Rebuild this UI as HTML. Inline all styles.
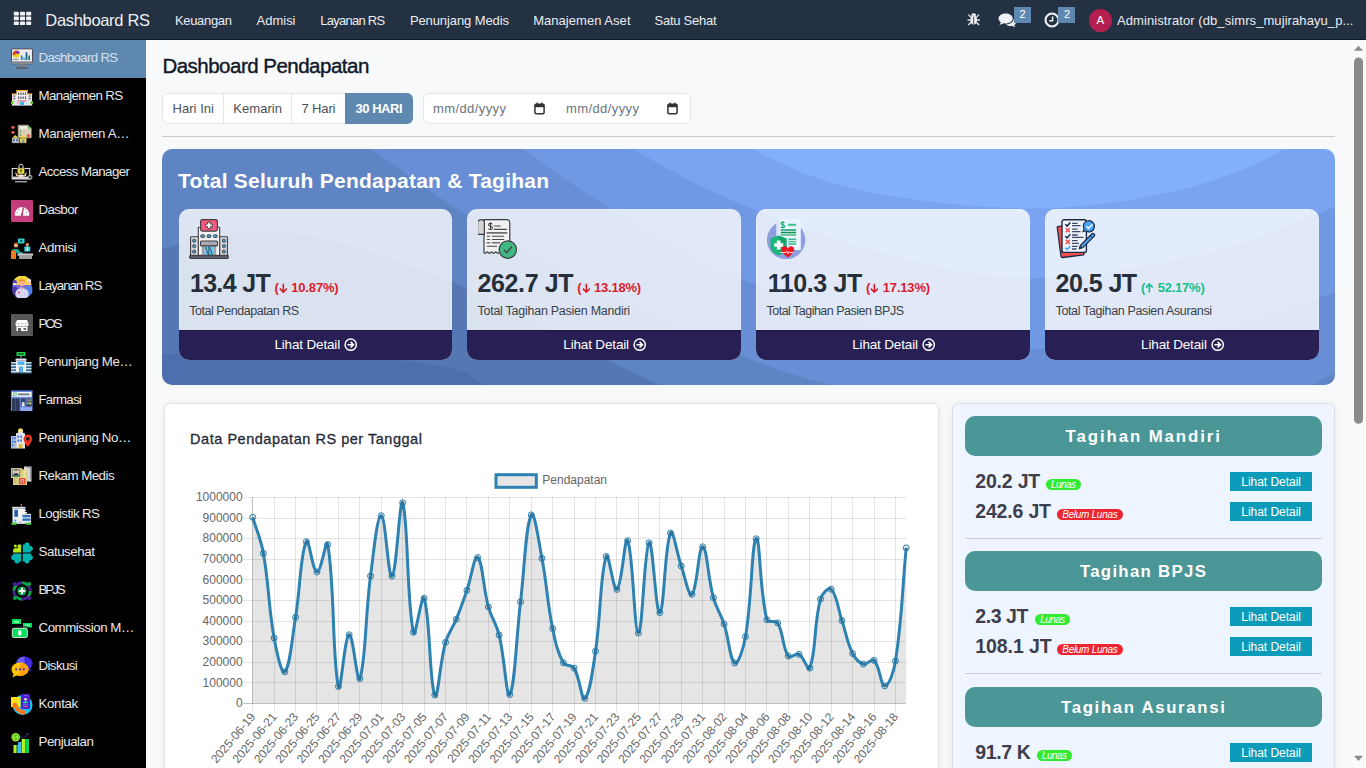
<!DOCTYPE html>
<html><head><meta charset="utf-8"><title>Dashboard RS</title>
<style>
*{box-sizing:border-box;margin:0;padding:0}
html,body{width:1366px;height:768px;overflow:hidden;background:#f8f9fa;font-family:"Liberation Sans",sans-serif;color:#212529}
.tx{position:absolute;white-space:nowrap;line-height:1;display:block}
.a{position:absolute;display:block}
#nav{position:absolute;left:0;top:0;width:1366px;height:40px;background:#243142;border-bottom:1px solid #131b25;z-index:5}
#side{position:absolute;left:0;top:40px;width:146px;height:728px;background:#000;z-index:4}
#sb{position:absolute;left:1351px;top:40px;width:15px;height:728px;background:#fafafa;z-index:6}

#main{position:absolute;left:0;top:0;width:1351px;height:768px;background:#f8f9fa;overflow:hidden}
.m5{-webkit-text-stroke:0.35px currentColor}
.card{position:absolute;top:208.7px;width:273.8px;height:151px;border-radius:10px;overflow:hidden;background:rgba(255,255,255,0.79);box-shadow:inset 0 0 0 1px rgba(255,255,255,0.2)}
.card .ft{position:absolute;left:0;top:121.1px;width:100%;height:30px;background:#281f54;border-top:1px solid #1e1549}
.btn{position:absolute;width:82px;height:19px;background:#0c9cb9}
.hd{position:absolute;left:965px;width:357px;height:40px;border-radius:10px;background:#4b9797}
.sep{position:absolute;left:965px;width:357px;height:1px;background:#c8cdd6}
</style></head>
<body>
<div id="main">
<span class="tx" style="left:162.40px;top:56px;font-size:20.5px;font-weight:400;color:#111827;letter-spacing:-0.509px;-webkit-text-stroke:0.4px #111827;">Dashboard Pendapatan</span>
<div class="a" style="left:162px;top:93px;width:251px;height:31px;border:1px solid #e3e6ea;border-radius:6px;background:#fff"></div><div class="a" style="left:223px;top:93px;width:1px;height:31px;background:#e3e6ea"></div><div class="a" style="left:291px;top:93px;width:1px;height:31px;background:#e3e6ea"></div><div class="a" style="left:345px;top:93px;width:68.2px;height:31px;background:#5f88b0;border-radius:0 6px 6px 0"></div>
<span class="tx" style="left:172.60px;top:102px;font-size:13px;font-weight:400;color:#495057;letter-spacing:0.018px;">Hari Ini</span>
<span class="tx" style="left:233.30px;top:102px;font-size:13px;font-weight:400;color:#495057;letter-spacing:0.049px;">Kemarin</span>
<span class="tx" style="left:301.50px;top:102px;font-size:13px;font-weight:400;color:#495057;letter-spacing:-0.136px;">7 Hari</span>
<span class="tx" style="left:355.50px;top:102px;font-size:13px;font-weight:700;color:#fff;letter-spacing:-0.475px;">30 HARI</span>
<div class="a" style="left:423px;top:93px;width:268px;height:31px;border:1px solid #e3e6ea;border-radius:6px;background:#fff"></div>
<span class="tx" style="left:433.00px;top:102px;font-size:13px;font-weight:400;color:#6c757d;letter-spacing:0.406px;">mm/dd/yyyy</span>
<svg class="a" style="left:534px;top:101.5px" width="11" height="13" viewBox="0 0 11 13"><rect x="0.9" y="2.2" width="9.2" height="9.6" rx="1.2" fill="none" stroke="#333" stroke-width="1.5"/><rect x="0.9" y="2.2" width="9.2" height="3" fill="#333"/><rect x="2.4" y="0.6" width="1.4" height="2.4" fill="#333"/><rect x="7.2" y="0.6" width="1.4" height="2.4" fill="#333"/></svg>
<span class="tx" style="left:566.00px;top:102px;font-size:13px;font-weight:400;color:#6c757d;letter-spacing:0.406px;">mm/dd/yyyy</span>
<svg class="a" style="left:667.4px;top:101.5px" width="11" height="13" viewBox="0 0 11 13"><rect x="0.9" y="2.2" width="9.2" height="9.6" rx="1.2" fill="none" stroke="#333" stroke-width="1.5"/><rect x="0.9" y="2.2" width="9.2" height="3" fill="#333"/><rect x="2.4" y="0.6" width="1.4" height="2.4" fill="#333"/><rect x="7.2" y="0.6" width="1.4" height="2.4" fill="#333"/></svg>
<div class="a" style="left:162px;top:136px;width:1173px;height:1px;background:#c8cacf"></div>
<svg class="a" style="left:162px;top:149px" width="1173" height="236" viewBox="162 149 1173 236"><g><rect x="162" y="149" width="1173" height="236" fill="#4d6fad"/><path d="M100.0 352.0C110.3 352.3 128.7 354.0 162.0 354.0C195.3 354.0 259.2 350.8 300.0 352.0C340.8 353.2 380.3 357.8 407.0 361.0C433.7 364.2 447.0 367.0 460.0 371.0C473.0 375.0 468.3 375.2 485.0 385.0C501.7 394.8 547.5 422.5 560.0 430.0L1400 450L1400 50L100 50Z" fill="#5578b5"/><path d="M100.0 270.0C110.3 266.5 142.8 254.5 162.0 249.0C181.2 243.5 197.0 239.8 215.0 237.0C233.0 234.2 249.2 231.2 270.0 232.0C290.8 232.8 309.7 233.7 340.0 242.0C370.3 250.3 418.7 268.0 452.0 282.0C485.3 296.0 514.0 313.0 540.0 326.0C566.0 339.0 588.0 350.2 608.0 360.0C628.0 369.8 634.7 373.3 660.0 385.0C685.3 396.7 743.3 422.5 760.0 430.0L1400 450L1400 50L100 50Z" fill="#5f84c4"/><path d="M300.0 100.0C311.8 108.2 343.2 129.8 371.0 149.0C398.8 168.2 428.8 191.5 467.0 215.0C505.2 238.5 553.2 266.2 600.0 290.0C646.8 313.8 709.3 342.2 748.0 358.0C786.7 373.8 798.3 376.3 832.0 385.0C865.7 393.7 905.3 404.2 950.0 410.0C994.7 415.8 1051.7 421.7 1100.0 420.0C1148.3 418.3 1204.8 405.8 1240.0 400.0C1275.2 394.2 1296.5 388.8 1311.0 385.0C1325.5 381.2 1312.2 382.8 1327.0 377.0C1341.8 371.2 1387.8 354.5 1400.0 350.0L1400 50L300 50Z" fill="#688fd5"/><path d="M470.0 100.0C479.0 108.2 498.8 129.8 524.0 149.0C549.2 168.2 583.7 192.8 621.0 215.0C658.3 237.2 701.5 262.3 748.0 282.0C794.5 301.7 851.8 321.8 900.0 333.0C948.2 344.2 987.0 349.2 1037.0 349.0C1087.0 348.8 1151.7 341.0 1200.0 332.0C1248.3 323.0 1293.7 306.2 1327.0 295.0C1360.3 283.8 1387.8 270.0 1400.0 265.0L1400 50L470 50Z" fill="#7199e3"/><path d="M580.0 100.0C589.0 108.2 606.0 131.2 634.0 149.0C662.0 166.8 703.7 188.8 748.0 207.0C792.3 225.2 851.8 246.2 900.0 258.0C948.2 269.8 987.0 278.5 1037.0 278.0C1087.0 277.5 1151.7 266.3 1200.0 255.0C1248.3 243.7 1293.7 224.2 1327.0 210.0C1360.3 195.8 1387.8 176.7 1400.0 170.0L1400 50L580 50Z" fill="#7aa3f2"/><path d="M700.0 100.0C708.8 108.2 726.3 134.0 753.0 149.0C779.7 164.0 813.8 180.1 860.0 190.0C906.2 199.9 976.7 208.5 1030.0 208.5C1083.3 208.5 1137.7 199.9 1180.0 190.0C1222.3 180.1 1257.3 164.0 1284.0 149.0C1310.7 134.0 1330.7 108.2 1340.0 100.0L1340 50L700 50Z" fill="#82b0fd"/></g><path fill-rule="evenodd" fill="#f8f9fa" d="M160 147H1337V387H160ZM172 149H1325A10 10 0 0 1 1335 159V375A10 10 0 0 1 1325 385H172A10 10 0 0 1 162 375V159A10 10 0 0 1 172 149Z"/></svg>
<span class="tx" style="left:178.00px;top:170px;font-size:21px;font-weight:700;color:#fff;letter-spacing:0.235px;">Total Seluruh Pendapatan &amp; Tagihan</span>
<div class="card" style="left:178.55px"><div class="ft"></div></div>
<svg class="a" style="left:189.05px;top:219px" width="40" height="40" viewBox="0 0 40 40"><rect x="1.6" y="17.700" width="7.900" height="18.800" rx=".6" fill="#dcdce2" stroke="#3d3d42" stroke-width="1.100"/><rect x="30.500" y="17.700" width="7.900" height="18.800" rx=".6" fill="#dcdce2" stroke="#3d3d42" stroke-width="1.100"/><rect x="9.300" y="8.300" width="21.400" height="28.200" rx=".8" fill="#f3f3f5" stroke="#3d3d42" stroke-width="1.100"/><rect x="11.600" y=".6" width="16.800" height="11.500" rx="1.600" fill="#f4587c" stroke="#3d3d42" stroke-width="1.100"/><path d="M18.700 3.100h2.600v2h2v2.600h-2v2h-2.600v-2h-2V5.100h2z" fill="#fff" stroke="#3d3d42" stroke-width=".9" stroke-linejoin="round"/><g fill="#4aa3d4" stroke="#3d3d42" stroke-width=".9"><rect x="11.800" y="15.800" width="3.800" height="2.700" rx=".8"/><rect x="18.100" y="15.800" width="3.800" height="2.700" rx=".8"/><rect x="24.400" y="15.800" width="3.800" height="2.700" rx=".8"/><rect x="3.700" y="20.300" width="2.900" height="2.900" rx=".8"/><rect x="3.700" y="25.700" width="2.900" height="2.900" rx=".8"/><rect x="3.700" y="31.200" width="2.900" height="2.900" rx=".8"/><rect x="33.400" y="20.300" width="2.900" height="2.900" rx=".8"/><rect x="33.400" y="25.700" width="2.900" height="2.900" rx=".8"/><rect x="33.400" y="31.200" width="2.900" height="2.900" rx=".8"/></g><rect x="12.800" y="26.500" width="3" height="10" fill="#a2a2aa"/><rect x="24.200" y="26.500" width="3" height="10" fill="#a2a2aa"/><rect x="15.800" y="27.300" width="8.400" height="9.200" fill="#5bc8f0"/><path d="M16.500 28l3 8M20.500 28l3 8M19.900 27.300v9.200" stroke="#2a4a5a" stroke-width=".9"/><rect x="11.500" y="22" width="17" height="4.900" rx="1" fill="#a9a9b4" stroke="#3d3d42" stroke-width="1.100"/><rect x=".5" y="36.300" width="39" height="3.200" rx="1" fill="#5c5c68" stroke="#3d3d42" stroke-width="1"/></svg>
<span class="tx" style="left:189.90px;top:271px;font-size:25px;font-weight:700;color:#262f3a;letter-spacing:-0.663px;">13.4 JT</span>
<span class="tx" style="left:274.40px;top:281px;font-size:13px;font-weight:700;color:#dc1c2b;letter-spacing:0.000px;">(</span>
<svg class="a" style="left:278.80px;top:282.8px" width="8.7" height="10" viewBox="0 0 8.7 10"><path d="M4.35 0.8V9.2M0.9 5.6L4.35 9.2 7.8 5.6" fill="none" stroke="#dc1c2b" stroke-width="1.6"/></svg>
<span class="tx" style="left:291.20px;top:281px;font-size:13px;font-weight:700;color:#dc1c2b;letter-spacing:-0.153px;">10.87%)</span>
<span class="tx" style="left:189.20px;top:305px;font-size:12.5px;font-weight:400;color:#3a3f47;letter-spacing:-0.458px;">Total Pendapatan RS</span>
<span class="tx" style="left:274.40px;top:338px;font-size:13.5px;font-weight:400;color:#fff;letter-spacing:-0.158px;">Lihat Detail</span>
<svg class="a" style="left:343.90px;top:337.8px" width="13.4" height="13.4" viewBox="0 0 14 14"><circle cx="7" cy="7" r="5.9" fill="none" stroke="#fff" stroke-width="1.5"/><path d="M3.6 7h5.5M6.9 4.1L9.9 7 6.9 9.9" fill="none" stroke="#fff" stroke-width="1.7"/></svg>
<div class="card" style="left:467.45px"><div class="ft"></div></div>
<svg class="a" style="left:477.95px;top:219px" width="40" height="40" viewBox="0 0 40 40"><g transform="translate(-1 0)"><path d="M7 .7h22.800a3 3 0 0 1 3 3v29.900q-1.075 -1.5 -2.15 0t-2.15 0q-1.075 -1.5 -2.15 0t-2.15 0q-1.075 -1.5 -2.15 0t-2.15 0q-1.075 -1.5 -2.15 0t-2.15 0q-1.075 -1.5 -2.15 0t-2.15 0q-1.075 -1.5 -2.15 0t-2.15 0V4z" fill="#f2f2f3" stroke="#3d3d42" stroke-width="1.200" stroke-linejoin="round"/><path d="M.6 15.400V4.100a3.400 3.400 0 0 1 6.800 0v11.300z" fill="#d4d4d9" stroke="#3d3d42" stroke-width="1.200" stroke-linejoin="round"/><g transform="translate(13.5 7.1) scale(.85) translate(-13.5 -7.1)"><path d="M15.60 5.10c-.5-.9-1.300-1.300-2.200-1.300-1.400 0-2.200.8-2.200 1.700 0 1.100.9 1.500 2.300 1.800 1.500.3 2.400.8 2.400 2 0 1-1 1.800-2.400 1.800-1 0-2-.4-2.500-1.300M13.50 2.70v8.800" fill="none" stroke="#3d3d42" stroke-width="1.2"/></g><g stroke="#4a4a4e" stroke-linecap="round"><path d="M17.300 7h6" stroke-width="1.100"/><path d="M17.300 10.400h12.300" stroke-width="1.100"/><path d="M10.300 13.900h19.300" stroke-width="1.700" stroke="#6e6e72"/><path d="M10.300 17.200h2.300M15.300 17.200h11.400" stroke-width="1.100"/><path d="M10.300 20.500h2.300M15.300 20.500h11.400" stroke-width="1.100"/><path d="M10.300 23.800h2.300M15.300 23.800h7" stroke-width="1.500" stroke="#6e6e72"/><path d="M10.300 27.200h9.500" stroke-width="1.100"/></g><circle cx="30.800" cy="30.600" r="8.700" fill="#41b883" stroke="#3d3d42" stroke-width="1.200"/><path d="M27 31l2.700 2.800 5-6.300" fill="none" stroke="#3d3d42" stroke-width="1.300"/></g></svg>
<span class="tx" style="left:477.60px;top:271px;font-size:25px;font-weight:700;color:#262f3a;letter-spacing:-0.397px;">262.7 JT</span>
<span class="tx" style="left:577.20px;top:281px;font-size:13px;font-weight:700;color:#dc1c2b;letter-spacing:0.000px;">(</span>
<svg class="a" style="left:581.60px;top:282.8px" width="8.7" height="10" viewBox="0 0 8.7 10"><path d="M4.35 0.8V9.2M0.9 5.6L4.35 9.2 7.8 5.6" fill="none" stroke="#dc1c2b" stroke-width="1.6"/></svg>
<span class="tx" style="left:594.00px;top:281px;font-size:13px;font-weight:700;color:#dc1c2b;letter-spacing:-0.220px;">13.18%)</span>
<span class="tx" style="left:477.50px;top:305px;font-size:12.5px;font-weight:400;color:#3a3f47;letter-spacing:-0.259px;">Total Tagihan Pasien Mandiri</span>
<span class="tx" style="left:563.30px;top:338px;font-size:13.5px;font-weight:400;color:#fff;letter-spacing:-0.158px;">Lihat Detail</span>
<svg class="a" style="left:632.80px;top:337.8px" width="13.4" height="13.4" viewBox="0 0 14 14"><circle cx="7" cy="7" r="5.9" fill="none" stroke="#fff" stroke-width="1.5"/><path d="M3.6 7h5.5M6.9 4.1L9.9 7 6.9 9.9" fill="none" stroke="#fff" stroke-width="1.7"/></svg>
<div class="card" style="left:756.35px"><div class="ft"></div></div>
<svg class="a" style="left:766.85px;top:219px" width="40" height="40" viewBox="0 0 40 40"><g transform="translate(-.6 0)"><circle cx="19.700" cy="21" r="19.200" fill="#8e9fe0"/><rect x="10.200" y="-.6" width="24.200" height="31.700" fill="#eaf3ff"/><rect x="10.200" y="-.6" width="3.300" height="31.700" fill="#dbe8fb"/><g transform="translate(16.4 5.6) scale(.78) translate(-16.4 -5.6)"><path d="M18.50 3.60c-.5-.9-1.300-1.300-2.200-1.300-1.400 0-2.200.8-2.200 1.700 0 1.100.9 1.500 2.300 1.800 1.500.3 2.400.8 2.400 2 0 1-1 1.800-2.400 1.800-1 0-2-.4-2.500-1.300M16.40 1.20v8.800" fill="none" stroke="#12a86c" stroke-width="1.3"/></g><rect x="21.600" y="4.800" width="8.200" height="2" fill="#3fc08a"/><rect x="14.400" y="10.300" width="15.400" height="1.500" fill="#0f9e62"/><rect x="14.400" y="12.800" width="15.400" height="1.500" fill="#0e9358"/><rect x="14.400" y="15" width="15.400" height="1.900" fill="#67c79b"/><rect x="22" y="19.600" width="7.800" height="1.300" fill="#2fb07a"/><rect x="22" y="21.900" width="7.800" height="1.400" fill="#3fc08a"/><rect x="22" y="24" width="7.800" height="1.800" fill="#4fc894"/><path d="M12.300 16.600l8 2.800v8c0 4-3 7-8 8.800-5-1.800-8-4.800-8-8.800v-8z" fill="#12a86c"/><path d="M12.300 16.600v19.600c-5-1.800-8-4.800-8-8.800v-8z" fill="#1cb87a"/><path d="M10.500 21.500h3.600v2.700h2.700v3.600h-2.700v2.700h-3.600v-2.700H7.800v-3.600h2.700z" fill="#fff"/><path d="M21.500 38.500c-3.500-2.800-6.200-5-6.200-7.500a3 3 0 0 1 6.200-1.300 3 3 0 0 1 6.200 1.300c0 2.500-2.700 4.700-6.200 7.500z" fill="#ee1620"/><path d="M13.500 33.500h6l1-1.500 1.200 3 1.300-2.300.6.800h3.600" fill="none" stroke="#fff" stroke-width=".8"/></g></svg>
<span class="tx" style="left:767.70px;top:271px;font-size:25px;font-weight:700;color:#262f3a;letter-spacing:-0.400px;">110.3 JT</span>
<span class="tx" style="left:866.00px;top:281px;font-size:13px;font-weight:700;color:#dc1c2b;letter-spacing:0.000px;">(</span>
<svg class="a" style="left:870.40px;top:282.8px" width="8.7" height="10" viewBox="0 0 8.7 10"><path d="M4.35 0.8V9.2M0.9 5.6L4.35 9.2 7.8 5.6" fill="none" stroke="#dc1c2b" stroke-width="1.6"/></svg>
<span class="tx" style="left:882.80px;top:281px;font-size:13px;font-weight:700;color:#dc1c2b;letter-spacing:-0.187px;">17.13%)</span>
<span class="tx" style="left:766.50px;top:305px;font-size:12.5px;font-weight:400;color:#3a3f47;letter-spacing:-0.515px;">Total Tagihan Pasien BPJS</span>
<span class="tx" style="left:852.20px;top:338px;font-size:13.5px;font-weight:400;color:#fff;letter-spacing:-0.158px;">Lihat Detail</span>
<svg class="a" style="left:921.70px;top:337.8px" width="13.4" height="13.4" viewBox="0 0 14 14"><circle cx="7" cy="7" r="5.9" fill="none" stroke="#fff" stroke-width="1.5"/><path d="M3.6 7h5.5M6.9 4.1L9.9 7 6.9 9.9" fill="none" stroke="#fff" stroke-width="1.7"/></svg>
<div class="card" style="left:1045.25px"><div class="ft"></div></div>
<svg class="a" style="left:1055.75px;top:219px" width="40" height="40" viewBox="0 0 40 40"><path d="M1.200 7.800l5-1 22 27.500-.5 1.500-21 2.700a1.500 1.500 0 0 1-1.700-1.300z" fill="#f0524f" stroke="#1f2a44" stroke-width="1.300" stroke-linejoin="round"/><rect x="6" y=".8" width="24.400" height="32.600" rx="2" fill="#eef3fb" stroke="#1f2a44" stroke-width="1.400"/><g fill="none" stroke-width="1.500"><path d="M9.300 5.200l1.800 1.900 3.300-3.700" stroke="#1f2a44"/><path d="M9.800 9.200l4.100 4.100M13.900 9.200l-4.100 4.100" stroke="#f0524f"/><path d="M9.300 17l1.800 1.900 3.300-3.700" stroke="#1f2a44"/><path d="M9.800 20.900l4.100 4.100M13.900 20.900l-4.100 4.100" stroke="#f0524f"/><path d="M9.300 28.700l1.800 1.900 3.300-3.700" stroke="#4ba3f5"/></g><g stroke="#3d4a68" stroke-width="1.300"><path d="M16 4.300h5.600M16 6.700h8.500M16 10.200h5.600M16 12.700h8.500M16 16h5.600M16 18.400h11.500M16 21.700h5.600M16 24.300h7M16 27.400h5.600M16 30h4.600"/></g><path d="M29.500 11.800l-2.500.8 1-2.500a5.600 5.600 0 1 1 1.500 1.700z" fill="#4ba3f5" stroke="#1f2a44" stroke-width="1.200"/><path d="M30.600 7.300l2 2 3.800-3.800" fill="none" stroke="#fff" stroke-width="1.500"/><path d="M23.300 29.800l1-3.300L35.800 15a1.600 1.600 0 0 1 2.300 2.300L26.600 28.800z" fill="#4ba3f5" stroke="#1f2a44" stroke-width="1.200" stroke-linejoin="round"/><path d="M23.300 29.800l1-3.300 2.300 2.300z" fill="#1f2a44"/><path d="M34.300 16.500l2.300 2.300" stroke="#1f2a44" stroke-width="1"/></svg>
<span class="tx" style="left:1055.60px;top:271px;font-size:25px;font-weight:700;color:#262f3a;letter-spacing:-0.563px;">20.5 JT</span>
<span class="tx" style="left:1140.90px;top:281px;font-size:13px;font-weight:700;color:#14bf8b;letter-spacing:0.000px;">(</span>
<svg class="a" style="left:1145.30px;top:282.8px" width="8.7" height="10" viewBox="0 0 8.7 10"><path d="M4.35 9.4V1M0.9 4.6L4.35 1 7.8 4.6" fill="none" stroke="#14bf8b" stroke-width="1.6"/></svg>
<span class="tx" style="left:1157.70px;top:281px;font-size:13px;font-weight:700;color:#14bf8b;letter-spacing:-0.220px;">52.17%)</span>
<span class="tx" style="left:1055.50px;top:305px;font-size:12.5px;font-weight:400;color:#3a3f47;letter-spacing:-0.355px;">Total Tagihan Pasien Asuransi</span>
<span class="tx" style="left:1141.10px;top:338px;font-size:13.5px;font-weight:400;color:#fff;letter-spacing:-0.158px;">Lihat Detail</span>
<svg class="a" style="left:1210.60px;top:337.8px" width="13.4" height="13.4" viewBox="0 0 14 14"><circle cx="7" cy="7" r="5.9" fill="none" stroke="#fff" stroke-width="1.5"/><path d="M3.6 7h5.5M6.9 4.1L9.9 7 6.9 9.9" fill="none" stroke="#fff" stroke-width="1.7"/></svg>
<div class="a" style="left:164px;top:403px;width:775px;height:400px;background:#fff;border:1px solid rgba(0,0,0,0.11);border-radius:6px;box-shadow:0 1px 9px rgba(0,0,0,0.075)"></div>
<span class="tx" style="left:190.10px;top:432px;font-size:14.5px;font-weight:400;color:#1f2937;letter-spacing:0.525px;-webkit-text-stroke:0.3px #1f2937;">Data Pendapatan RS per Tanggal</span>
<svg class="a" style="left:165px;top:404px" width="773" height="364" viewBox="165 404 773 364"><path d="M243.2 703.5H906.0" stroke="rgba(0,0,0,0.25)" stroke-width="1"/><path d="M243.2 682.5H906.0" stroke="rgba(0,0,0,0.1)" stroke-width="1"/><path d="M243.2 662.5H906.0" stroke="rgba(0,0,0,0.1)" stroke-width="1"/><path d="M243.2 641.5H906.0" stroke="rgba(0,0,0,0.1)" stroke-width="1"/><path d="M243.2 621.5H906.0" stroke="rgba(0,0,0,0.1)" stroke-width="1"/><path d="M243.2 600.5H906.0" stroke="rgba(0,0,0,0.1)" stroke-width="1"/><path d="M243.2 579.5H906.0" stroke="rgba(0,0,0,0.1)" stroke-width="1"/><path d="M243.2 559.5H906.0" stroke="rgba(0,0,0,0.1)" stroke-width="1"/><path d="M243.2 538.5H906.0" stroke="rgba(0,0,0,0.1)" stroke-width="1"/><path d="M243.2 518.5H906.0" stroke="rgba(0,0,0,0.1)" stroke-width="1"/><path d="M243.2 497.5H906.0" stroke="rgba(0,0,0,0.1)" stroke-width="1"/><path d="M252.5 497.0V704.0" stroke="rgba(0,0,0,0.25)" stroke-width="1"/><path d="M252.5 704.0V713.0" stroke="rgba(0,0,0,0.1)" stroke-width="1"/><path d="M274.5 497.0V713.0" stroke="rgba(0,0,0,0.1)" stroke-width="1"/><path d="M295.5 497.0V713.0" stroke="rgba(0,0,0,0.1)" stroke-width="1"/><path d="M316.5 497.0V713.0" stroke="rgba(0,0,0,0.1)" stroke-width="1"/><path d="M338.5 497.0V713.0" stroke="rgba(0,0,0,0.1)" stroke-width="1"/><path d="M359.5 497.0V713.0" stroke="rgba(0,0,0,0.1)" stroke-width="1"/><path d="M381.5 497.0V713.0" stroke="rgba(0,0,0,0.1)" stroke-width="1"/><path d="M402.5 497.0V713.0" stroke="rgba(0,0,0,0.1)" stroke-width="1"/><path d="M424.5 497.0V713.0" stroke="rgba(0,0,0,0.1)" stroke-width="1"/><path d="M445.5 497.0V713.0" stroke="rgba(0,0,0,0.1)" stroke-width="1"/><path d="M466.5 497.0V713.0" stroke="rgba(0,0,0,0.1)" stroke-width="1"/><path d="M488.5 497.0V713.0" stroke="rgba(0,0,0,0.1)" stroke-width="1"/><path d="M509.5 497.0V713.0" stroke="rgba(0,0,0,0.1)" stroke-width="1"/><path d="M531.5 497.0V713.0" stroke="rgba(0,0,0,0.1)" stroke-width="1"/><path d="M552.5 497.0V713.0" stroke="rgba(0,0,0,0.1)" stroke-width="1"/><path d="M574.5 497.0V713.0" stroke="rgba(0,0,0,0.1)" stroke-width="1"/><path d="M595.5 497.0V713.0" stroke="rgba(0,0,0,0.1)" stroke-width="1"/><path d="M616.5 497.0V713.0" stroke="rgba(0,0,0,0.1)" stroke-width="1"/><path d="M638.5 497.0V713.0" stroke="rgba(0,0,0,0.1)" stroke-width="1"/><path d="M659.5 497.0V713.0" stroke="rgba(0,0,0,0.1)" stroke-width="1"/><path d="M681.5 497.0V713.0" stroke="rgba(0,0,0,0.1)" stroke-width="1"/><path d="M702.5 497.0V713.0" stroke="rgba(0,0,0,0.1)" stroke-width="1"/><path d="M724.5 497.0V713.0" stroke="rgba(0,0,0,0.1)" stroke-width="1"/><path d="M745.5 497.0V713.0" stroke="rgba(0,0,0,0.1)" stroke-width="1"/><path d="M766.5 497.0V713.0" stroke="rgba(0,0,0,0.1)" stroke-width="1"/><path d="M788.5 497.0V713.0" stroke="rgba(0,0,0,0.1)" stroke-width="1"/><path d="M809.5 497.0V713.0" stroke="rgba(0,0,0,0.1)" stroke-width="1"/><path d="M831.5 497.0V713.0" stroke="rgba(0,0,0,0.1)" stroke-width="1"/><path d="M852.5 497.0V713.0" stroke="rgba(0,0,0,0.1)" stroke-width="1"/><path d="M874.5 497.0V713.0" stroke="rgba(0,0,0,0.1)" stroke-width="1"/><path d="M895.5 497.0V713.0" stroke="rgba(0,0,0,0.1)" stroke-width="1"/><path d="M252.70 517.35C256.99 531.77 260.79 538.63 263.41 553.40C269.36 586.92 268.07 604.59 274.13 638.07C276.64 651.97 281.50 675.09 284.84 671.85C290.07 666.77 291.94 639.21 295.55 617.26C300.51 587.13 300.23 554.42 306.27 541.66C308.80 536.29 312.51 571.34 316.98 571.94C321.08 572.49 326.22 536.69 327.69 544.54C334.79 582.51 332.15 660.15 338.40 686.48C340.72 696.24 344.50 636.46 349.12 634.77C353.07 633.33 357.22 685.80 359.83 678.65C365.79 662.32 365.17 616.94 370.54 576.06C373.74 551.76 376.97 515.70 381.26 515.70C385.54 515.70 388.09 578.41 391.97 576.06C396.66 573.22 399.57 497.00 402.68 502.72C408.14 517.05 406.67 602.29 413.40 632.30C415.24 640.52 421.81 591.58 424.11 598.31C430.38 616.67 429.30 683.66 434.82 695.02C437.87 701.30 439.72 662.94 445.54 642.39C448.29 632.66 452.38 628.72 456.25 619.32C460.95 607.88 462.91 601.97 466.96 590.27C471.48 577.25 474.20 554.82 477.68 557.52C482.77 561.49 483.01 587.51 488.39 606.96C491.58 618.49 496.26 623.37 499.10 634.98C504.83 658.39 506.44 699.73 509.81 694.51C515.01 686.46 516.11 638.87 520.53 601.81C524.68 567.02 525.57 526.38 531.24 514.88C534.14 509.00 538.64 540.76 541.95 558.34C547.21 586.25 546.97 600.82 552.67 628.59C555.54 642.60 556.96 650.93 563.38 662.79C565.53 666.75 571.77 664.27 574.09 668.14C580.34 678.53 581.39 701.12 584.81 698.42C589.96 694.36 592.64 670.36 595.52 651.25C601.21 613.58 599.95 574.62 606.23 556.49C608.52 549.90 613.44 592.05 616.95 589.45C622.01 585.70 624.66 534.55 627.66 540.63C633.23 551.93 634.03 632.46 638.37 632.92C642.60 633.36 644.27 547.43 649.09 542.89C652.84 539.36 655.79 614.58 659.80 612.73C664.36 610.62 664.52 546.08 670.51 533.01C673.09 527.37 676.66 552.88 681.22 565.97C685.23 577.44 688.65 597.34 691.94 594.39C697.22 589.67 698.50 546.17 702.65 546.81C707.07 547.49 707.83 577.72 713.36 597.69C716.40 608.62 720.53 613.26 724.08 624.06C729.10 639.38 729.76 660.04 734.79 662.99C738.33 665.07 743.58 647.77 745.50 636.62C752.15 598.08 751.53 542.47 756.22 538.77C760.10 535.71 759.39 590.12 766.93 619.73C767.96 623.78 775.57 619.39 777.64 622.92C784.14 633.98 781.82 646.61 788.36 656.19C790.39 659.18 795.78 652.51 799.07 654.34C804.35 657.29 808.07 672.56 809.78 668.14C816.64 650.48 813.40 625.24 820.50 599.13C821.98 593.68 828.59 586.62 831.21 589.24C837.16 595.19 837.73 608.00 841.92 620.56C846.31 633.71 846.66 641.37 852.63 653.52C855.23 658.80 858.46 662.55 863.35 664.12C867.03 665.31 871.57 657.89 874.06 660.42C880.14 666.58 880.45 685.75 884.77 685.86C889.02 685.96 893.83 671.58 895.49 660.93C902.41 616.37 901.91 593.08 906.20 547.84L906.20 703.0L252.70 703.0Z" fill="rgba(0,0,0,0.1)"/><path d="M252.70 517.35C256.99 531.77 260.79 538.63 263.41 553.40C269.36 586.92 268.07 604.59 274.13 638.07C276.64 651.97 281.50 675.09 284.84 671.85C290.07 666.77 291.94 639.21 295.55 617.26C300.51 587.13 300.23 554.42 306.27 541.66C308.80 536.29 312.51 571.34 316.98 571.94C321.08 572.49 326.22 536.69 327.69 544.54C334.79 582.51 332.15 660.15 338.40 686.48C340.72 696.24 344.50 636.46 349.12 634.77C353.07 633.33 357.22 685.80 359.83 678.65C365.79 662.32 365.17 616.94 370.54 576.06C373.74 551.76 376.97 515.70 381.26 515.70C385.54 515.70 388.09 578.41 391.97 576.06C396.66 573.22 399.57 497.00 402.68 502.72C408.14 517.05 406.67 602.29 413.40 632.30C415.24 640.52 421.81 591.58 424.11 598.31C430.38 616.67 429.30 683.66 434.82 695.02C437.87 701.30 439.72 662.94 445.54 642.39C448.29 632.66 452.38 628.72 456.25 619.32C460.95 607.88 462.91 601.97 466.96 590.27C471.48 577.25 474.20 554.82 477.68 557.52C482.77 561.49 483.01 587.51 488.39 606.96C491.58 618.49 496.26 623.37 499.10 634.98C504.83 658.39 506.44 699.73 509.81 694.51C515.01 686.46 516.11 638.87 520.53 601.81C524.68 567.02 525.57 526.38 531.24 514.88C534.14 509.00 538.64 540.76 541.95 558.34C547.21 586.25 546.97 600.82 552.67 628.59C555.54 642.60 556.96 650.93 563.38 662.79C565.53 666.75 571.77 664.27 574.09 668.14C580.34 678.53 581.39 701.12 584.81 698.42C589.96 694.36 592.64 670.36 595.52 651.25C601.21 613.58 599.95 574.62 606.23 556.49C608.52 549.90 613.44 592.05 616.95 589.45C622.01 585.70 624.66 534.55 627.66 540.63C633.23 551.93 634.03 632.46 638.37 632.92C642.60 633.36 644.27 547.43 649.09 542.89C652.84 539.36 655.79 614.58 659.80 612.73C664.36 610.62 664.52 546.08 670.51 533.01C673.09 527.37 676.66 552.88 681.22 565.97C685.23 577.44 688.65 597.34 691.94 594.39C697.22 589.67 698.50 546.17 702.65 546.81C707.07 547.49 707.83 577.72 713.36 597.69C716.40 608.62 720.53 613.26 724.08 624.06C729.10 639.38 729.76 660.04 734.79 662.99C738.33 665.07 743.58 647.77 745.50 636.62C752.15 598.08 751.53 542.47 756.22 538.77C760.10 535.71 759.39 590.12 766.93 619.73C767.96 623.78 775.57 619.39 777.64 622.92C784.14 633.98 781.82 646.61 788.36 656.19C790.39 659.18 795.78 652.51 799.07 654.34C804.35 657.29 808.07 672.56 809.78 668.14C816.64 650.48 813.40 625.24 820.50 599.13C821.98 593.68 828.59 586.62 831.21 589.24C837.16 595.19 837.73 608.00 841.92 620.56C846.31 633.71 846.66 641.37 852.63 653.52C855.23 658.80 858.46 662.55 863.35 664.12C867.03 665.31 871.57 657.89 874.06 660.42C880.14 666.58 880.45 685.75 884.77 685.86C889.02 685.96 893.83 671.58 895.49 660.93C902.41 616.37 901.91 593.08 906.20 547.84" fill="none" stroke="#2d82b1" stroke-width="3" stroke-linejoin="round"/><circle cx="252.70" cy="517.35" r="3" fill="rgba(0,0,0,0.1)" stroke="#2d82b1" stroke-width="1"/><circle cx="263.41" cy="553.40" r="3" fill="rgba(0,0,0,0.1)" stroke="#2d82b1" stroke-width="1"/><circle cx="274.13" cy="638.07" r="3" fill="rgba(0,0,0,0.1)" stroke="#2d82b1" stroke-width="1"/><circle cx="284.84" cy="671.85" r="3" fill="rgba(0,0,0,0.1)" stroke="#2d82b1" stroke-width="1"/><circle cx="295.55" cy="617.26" r="3" fill="rgba(0,0,0,0.1)" stroke="#2d82b1" stroke-width="1"/><circle cx="306.27" cy="541.66" r="3" fill="rgba(0,0,0,0.1)" stroke="#2d82b1" stroke-width="1"/><circle cx="316.98" cy="571.94" r="3" fill="rgba(0,0,0,0.1)" stroke="#2d82b1" stroke-width="1"/><circle cx="327.69" cy="544.54" r="3" fill="rgba(0,0,0,0.1)" stroke="#2d82b1" stroke-width="1"/><circle cx="338.40" cy="686.48" r="3" fill="rgba(0,0,0,0.1)" stroke="#2d82b1" stroke-width="1"/><circle cx="349.12" cy="634.77" r="3" fill="rgba(0,0,0,0.1)" stroke="#2d82b1" stroke-width="1"/><circle cx="359.83" cy="678.65" r="3" fill="rgba(0,0,0,0.1)" stroke="#2d82b1" stroke-width="1"/><circle cx="370.54" cy="576.06" r="3" fill="rgba(0,0,0,0.1)" stroke="#2d82b1" stroke-width="1"/><circle cx="381.26" cy="515.70" r="3" fill="rgba(0,0,0,0.1)" stroke="#2d82b1" stroke-width="1"/><circle cx="391.97" cy="576.06" r="3" fill="rgba(0,0,0,0.1)" stroke="#2d82b1" stroke-width="1"/><circle cx="402.68" cy="502.72" r="3" fill="rgba(0,0,0,0.1)" stroke="#2d82b1" stroke-width="1"/><circle cx="413.40" cy="632.30" r="3" fill="rgba(0,0,0,0.1)" stroke="#2d82b1" stroke-width="1"/><circle cx="424.11" cy="598.31" r="3" fill="rgba(0,0,0,0.1)" stroke="#2d82b1" stroke-width="1"/><circle cx="434.82" cy="695.02" r="3" fill="rgba(0,0,0,0.1)" stroke="#2d82b1" stroke-width="1"/><circle cx="445.54" cy="642.39" r="3" fill="rgba(0,0,0,0.1)" stroke="#2d82b1" stroke-width="1"/><circle cx="456.25" cy="619.32" r="3" fill="rgba(0,0,0,0.1)" stroke="#2d82b1" stroke-width="1"/><circle cx="466.96" cy="590.27" r="3" fill="rgba(0,0,0,0.1)" stroke="#2d82b1" stroke-width="1"/><circle cx="477.68" cy="557.52" r="3" fill="rgba(0,0,0,0.1)" stroke="#2d82b1" stroke-width="1"/><circle cx="488.39" cy="606.96" r="3" fill="rgba(0,0,0,0.1)" stroke="#2d82b1" stroke-width="1"/><circle cx="499.10" cy="634.98" r="3" fill="rgba(0,0,0,0.1)" stroke="#2d82b1" stroke-width="1"/><circle cx="509.81" cy="694.51" r="3" fill="rgba(0,0,0,0.1)" stroke="#2d82b1" stroke-width="1"/><circle cx="520.53" cy="601.81" r="3" fill="rgba(0,0,0,0.1)" stroke="#2d82b1" stroke-width="1"/><circle cx="531.24" cy="514.88" r="3" fill="rgba(0,0,0,0.1)" stroke="#2d82b1" stroke-width="1"/><circle cx="541.95" cy="558.34" r="3" fill="rgba(0,0,0,0.1)" stroke="#2d82b1" stroke-width="1"/><circle cx="552.67" cy="628.59" r="3" fill="rgba(0,0,0,0.1)" stroke="#2d82b1" stroke-width="1"/><circle cx="563.38" cy="662.79" r="3" fill="rgba(0,0,0,0.1)" stroke="#2d82b1" stroke-width="1"/><circle cx="574.09" cy="668.14" r="3" fill="rgba(0,0,0,0.1)" stroke="#2d82b1" stroke-width="1"/><circle cx="584.81" cy="698.42" r="3" fill="rgba(0,0,0,0.1)" stroke="#2d82b1" stroke-width="1"/><circle cx="595.52" cy="651.25" r="3" fill="rgba(0,0,0,0.1)" stroke="#2d82b1" stroke-width="1"/><circle cx="606.23" cy="556.49" r="3" fill="rgba(0,0,0,0.1)" stroke="#2d82b1" stroke-width="1"/><circle cx="616.95" cy="589.45" r="3" fill="rgba(0,0,0,0.1)" stroke="#2d82b1" stroke-width="1"/><circle cx="627.66" cy="540.63" r="3" fill="rgba(0,0,0,0.1)" stroke="#2d82b1" stroke-width="1"/><circle cx="638.37" cy="632.92" r="3" fill="rgba(0,0,0,0.1)" stroke="#2d82b1" stroke-width="1"/><circle cx="649.09" cy="542.89" r="3" fill="rgba(0,0,0,0.1)" stroke="#2d82b1" stroke-width="1"/><circle cx="659.80" cy="612.73" r="3" fill="rgba(0,0,0,0.1)" stroke="#2d82b1" stroke-width="1"/><circle cx="670.51" cy="533.01" r="3" fill="rgba(0,0,0,0.1)" stroke="#2d82b1" stroke-width="1"/><circle cx="681.22" cy="565.97" r="3" fill="rgba(0,0,0,0.1)" stroke="#2d82b1" stroke-width="1"/><circle cx="691.94" cy="594.39" r="3" fill="rgba(0,0,0,0.1)" stroke="#2d82b1" stroke-width="1"/><circle cx="702.65" cy="546.81" r="3" fill="rgba(0,0,0,0.1)" stroke="#2d82b1" stroke-width="1"/><circle cx="713.36" cy="597.69" r="3" fill="rgba(0,0,0,0.1)" stroke="#2d82b1" stroke-width="1"/><circle cx="724.08" cy="624.06" r="3" fill="rgba(0,0,0,0.1)" stroke="#2d82b1" stroke-width="1"/><circle cx="734.79" cy="662.99" r="3" fill="rgba(0,0,0,0.1)" stroke="#2d82b1" stroke-width="1"/><circle cx="745.50" cy="636.62" r="3" fill="rgba(0,0,0,0.1)" stroke="#2d82b1" stroke-width="1"/><circle cx="756.22" cy="538.77" r="3" fill="rgba(0,0,0,0.1)" stroke="#2d82b1" stroke-width="1"/><circle cx="766.93" cy="619.73" r="3" fill="rgba(0,0,0,0.1)" stroke="#2d82b1" stroke-width="1"/><circle cx="777.64" cy="622.92" r="3" fill="rgba(0,0,0,0.1)" stroke="#2d82b1" stroke-width="1"/><circle cx="788.36" cy="656.19" r="3" fill="rgba(0,0,0,0.1)" stroke="#2d82b1" stroke-width="1"/><circle cx="799.07" cy="654.34" r="3" fill="rgba(0,0,0,0.1)" stroke="#2d82b1" stroke-width="1"/><circle cx="809.78" cy="668.14" r="3" fill="rgba(0,0,0,0.1)" stroke="#2d82b1" stroke-width="1"/><circle cx="820.50" cy="599.13" r="3" fill="rgba(0,0,0,0.1)" stroke="#2d82b1" stroke-width="1"/><circle cx="831.21" cy="589.24" r="3" fill="rgba(0,0,0,0.1)" stroke="#2d82b1" stroke-width="1"/><circle cx="841.92" cy="620.56" r="3" fill="rgba(0,0,0,0.1)" stroke="#2d82b1" stroke-width="1"/><circle cx="852.63" cy="653.52" r="3" fill="rgba(0,0,0,0.1)" stroke="#2d82b1" stroke-width="1"/><circle cx="863.35" cy="664.12" r="3" fill="rgba(0,0,0,0.1)" stroke="#2d82b1" stroke-width="1"/><circle cx="874.06" cy="660.42" r="3" fill="rgba(0,0,0,0.1)" stroke="#2d82b1" stroke-width="1"/><circle cx="884.77" cy="685.86" r="3" fill="rgba(0,0,0,0.1)" stroke="#2d82b1" stroke-width="1"/><circle cx="895.49" cy="660.93" r="3" fill="rgba(0,0,0,0.1)" stroke="#2d82b1" stroke-width="1"/><circle cx="906.20" cy="547.84" r="3" fill="rgba(0,0,0,0.1)" stroke="#2d82b1" stroke-width="1"/><rect x="496" y="474.7" width="40.3" height="12.6" fill="#e6e6e6" stroke="#2d82b1" stroke-width="3"/><text x="542.3" y="484.4" font-family="Liberation Sans" font-size="12" fill="#666">Pendapatan</text><text x="242.6" y="707.1" text-anchor="end" font-family="Liberation Sans" font-size="12" fill="#666">0</text><text x="242.6" y="686.5" text-anchor="end" font-family="Liberation Sans" font-size="12" fill="#666">100000</text><text x="242.6" y="665.9" text-anchor="end" font-family="Liberation Sans" font-size="12" fill="#666">200000</text><text x="242.6" y="645.3" text-anchor="end" font-family="Liberation Sans" font-size="12" fill="#666">300000</text><text x="242.6" y="624.7" text-anchor="end" font-family="Liberation Sans" font-size="12" fill="#666">400000</text><text x="242.6" y="604.1" text-anchor="end" font-family="Liberation Sans" font-size="12" fill="#666">500000</text><text x="242.6" y="583.5" text-anchor="end" font-family="Liberation Sans" font-size="12" fill="#666">600000</text><text x="242.6" y="562.9" text-anchor="end" font-family="Liberation Sans" font-size="12" fill="#666">700000</text><text x="242.6" y="542.3" text-anchor="end" font-family="Liberation Sans" font-size="12" fill="#666">800000</text><text x="242.6" y="521.7" text-anchor="end" font-family="Liberation Sans" font-size="12" fill="#666">900000</text><text x="242.6" y="501.1" text-anchor="end" font-family="Liberation Sans" font-size="12" fill="#666">1000000</text><text transform="translate(252.70 714.3) rotate(-50)" x="0" y="4.3" text-anchor="end" font-family="Liberation Sans" font-size="12" fill="#666">2025-06-19</text><text transform="translate(274.13 714.3) rotate(-50)" x="0" y="4.3" text-anchor="end" font-family="Liberation Sans" font-size="12" fill="#666">2025-06-21</text><text transform="translate(295.55 714.3) rotate(-50)" x="0" y="4.3" text-anchor="end" font-family="Liberation Sans" font-size="12" fill="#666">2025-06-23</text><text transform="translate(316.98 714.3) rotate(-50)" x="0" y="4.3" text-anchor="end" font-family="Liberation Sans" font-size="12" fill="#666">2025-06-25</text><text transform="translate(338.40 714.3) rotate(-50)" x="0" y="4.3" text-anchor="end" font-family="Liberation Sans" font-size="12" fill="#666">2025-06-27</text><text transform="translate(359.83 714.3) rotate(-50)" x="0" y="4.3" text-anchor="end" font-family="Liberation Sans" font-size="12" fill="#666">2025-06-29</text><text transform="translate(381.26 714.3) rotate(-50)" x="0" y="4.3" text-anchor="end" font-family="Liberation Sans" font-size="12" fill="#666">2025-07-01</text><text transform="translate(402.68 714.3) rotate(-50)" x="0" y="4.3" text-anchor="end" font-family="Liberation Sans" font-size="12" fill="#666">2025-07-03</text><text transform="translate(424.11 714.3) rotate(-50)" x="0" y="4.3" text-anchor="end" font-family="Liberation Sans" font-size="12" fill="#666">2025-07-05</text><text transform="translate(445.54 714.3) rotate(-50)" x="0" y="4.3" text-anchor="end" font-family="Liberation Sans" font-size="12" fill="#666">2025-07-07</text><text transform="translate(466.96 714.3) rotate(-50)" x="0" y="4.3" text-anchor="end" font-family="Liberation Sans" font-size="12" fill="#666">2025-07-09</text><text transform="translate(488.39 714.3) rotate(-50)" x="0" y="4.3" text-anchor="end" font-family="Liberation Sans" font-size="12" fill="#666">2025-07-11</text><text transform="translate(509.81 714.3) rotate(-50)" x="0" y="4.3" text-anchor="end" font-family="Liberation Sans" font-size="12" fill="#666">2025-07-13</text><text transform="translate(531.24 714.3) rotate(-50)" x="0" y="4.3" text-anchor="end" font-family="Liberation Sans" font-size="12" fill="#666">2025-07-15</text><text transform="translate(552.67 714.3) rotate(-50)" x="0" y="4.3" text-anchor="end" font-family="Liberation Sans" font-size="12" fill="#666">2025-07-17</text><text transform="translate(574.09 714.3) rotate(-50)" x="0" y="4.3" text-anchor="end" font-family="Liberation Sans" font-size="12" fill="#666">2025-07-19</text><text transform="translate(595.52 714.3) rotate(-50)" x="0" y="4.3" text-anchor="end" font-family="Liberation Sans" font-size="12" fill="#666">2025-07-21</text><text transform="translate(616.95 714.3) rotate(-50)" x="0" y="4.3" text-anchor="end" font-family="Liberation Sans" font-size="12" fill="#666">2025-07-23</text><text transform="translate(638.37 714.3) rotate(-50)" x="0" y="4.3" text-anchor="end" font-family="Liberation Sans" font-size="12" fill="#666">2025-07-25</text><text transform="translate(659.80 714.3) rotate(-50)" x="0" y="4.3" text-anchor="end" font-family="Liberation Sans" font-size="12" fill="#666">2025-07-27</text><text transform="translate(681.22 714.3) rotate(-50)" x="0" y="4.3" text-anchor="end" font-family="Liberation Sans" font-size="12" fill="#666">2025-07-29</text><text transform="translate(702.65 714.3) rotate(-50)" x="0" y="4.3" text-anchor="end" font-family="Liberation Sans" font-size="12" fill="#666">2025-07-31</text><text transform="translate(724.08 714.3) rotate(-50)" x="0" y="4.3" text-anchor="end" font-family="Liberation Sans" font-size="12" fill="#666">2025-08-02</text><text transform="translate(745.50 714.3) rotate(-50)" x="0" y="4.3" text-anchor="end" font-family="Liberation Sans" font-size="12" fill="#666">2025-08-04</text><text transform="translate(766.93 714.3) rotate(-50)" x="0" y="4.3" text-anchor="end" font-family="Liberation Sans" font-size="12" fill="#666">2025-08-06</text><text transform="translate(788.36 714.3) rotate(-50)" x="0" y="4.3" text-anchor="end" font-family="Liberation Sans" font-size="12" fill="#666">2025-08-08</text><text transform="translate(809.78 714.3) rotate(-50)" x="0" y="4.3" text-anchor="end" font-family="Liberation Sans" font-size="12" fill="#666">2025-08-10</text><text transform="translate(831.21 714.3) rotate(-50)" x="0" y="4.3" text-anchor="end" font-family="Liberation Sans" font-size="12" fill="#666">2025-08-12</text><text transform="translate(852.63 714.3) rotate(-50)" x="0" y="4.3" text-anchor="end" font-family="Liberation Sans" font-size="12" fill="#666">2025-08-14</text><text transform="translate(874.06 714.3) rotate(-50)" x="0" y="4.3" text-anchor="end" font-family="Liberation Sans" font-size="12" fill="#666">2025-08-16</text><text transform="translate(895.49 714.3) rotate(-50)" x="0" y="4.3" text-anchor="end" font-family="Liberation Sans" font-size="12" fill="#666">2025-08-18</text></svg>
<div class="a" style="left:952px;top:403px;width:383px;height:400px;background:#eef5ff;border:1px solid #dddfe2;border-radius:6px;box-shadow:0 1px 9px rgba(0,0,0,0.075)"></div>
<div class="hd" style="top:416px"></div>
<span class="tx" style="left:1065.60px;top:429px;font-size:16.8px;font-weight:700;color:#fff;letter-spacing:1.917px;">Tagihan Mandiri</span>
<span class="tx" style="left:975.30px;top:472px;font-size:19.5px;font-weight:700;color:#3e3e4c;letter-spacing:-0.204px;">20.2 JT</span>
<div class="a" style="left:1046px;top:479.1px;width:35.2px;height:11px;border-radius:6px;background:#33ea33"></div>
<span class="tx" style="left:1051.10px;top:480px;font-size:10px;font-weight:400;color:#fff;letter-spacing:-0.562px;font-style:italic;">Lunas</span>
<div class="btn" style="left:1230px;top:472.1px"></div>
<span class="tx" style="left:1241.30px;top:476px;font-size:12px;font-weight:400;color:#fff;letter-spacing:-0.030px;">Lihat Detail</span>
<span class="tx" style="left:975.30px;top:502px;font-size:19.5px;font-weight:700;color:#3e3e4c;letter-spacing:-0.182px;">242.6 JT</span>
<div class="a" style="left:1056.9px;top:509.1px;width:66.1px;height:11px;border-radius:6px;background:#ec2530"></div>
<span class="tx" style="left:1062.20px;top:510px;font-size:10px;font-weight:400;color:#fff;letter-spacing:-0.287px;font-style:italic;">Belum Lunas</span>
<div class="btn" style="left:1230px;top:502.1px"></div>
<span class="tx" style="left:1241.30px;top:506px;font-size:12px;font-weight:400;color:#fff;letter-spacing:-0.030px;">Lihat Detail</span>
<div class="sep" style="top:538.2px"></div>
<div class="hd" style="top:551px"></div>
<span class="tx" style="left:1079.90px;top:564px;font-size:16.8px;font-weight:700;color:#fff;letter-spacing:1.308px;">Tagihan BPJS</span>
<span class="tx" style="left:975.30px;top:607px;font-size:19.5px;font-weight:700;color:#3e3e4c;letter-spacing:-0.436px;">2.3 JT</span>
<div class="a" style="left:1035.2px;top:614.1px;width:35.0px;height:11px;border-radius:6px;background:#33ea33"></div>
<span class="tx" style="left:1040.30px;top:615px;font-size:10px;font-weight:400;color:#fff;letter-spacing:-0.612px;font-style:italic;">Lunas</span>
<div class="btn" style="left:1230px;top:607.1px"></div>
<span class="tx" style="left:1241.30px;top:611px;font-size:12px;font-weight:400;color:#fff;letter-spacing:-0.030px;">Lihat Detail</span>
<span class="tx" style="left:975.30px;top:637px;font-size:19.5px;font-weight:700;color:#3e3e4c;letter-spacing:-0.082px;">108.1 JT</span>
<div class="a" style="left:1057px;top:644.1px;width:66.0px;height:11px;border-radius:6px;background:#ec2530"></div>
<span class="tx" style="left:1062.30px;top:645px;font-size:10px;font-weight:400;color:#fff;letter-spacing:-0.297px;font-style:italic;">Belum Lunas</span>
<div class="btn" style="left:1230px;top:637.1px"></div>
<span class="tx" style="left:1241.30px;top:641px;font-size:12px;font-weight:400;color:#fff;letter-spacing:-0.030px;">Lihat Detail</span>
<div class="sep" style="top:673.2px"></div>
<div class="hd" style="top:687px"></div>
<span class="tx" style="left:1061.00px;top:700px;font-size:16.8px;font-weight:700;color:#fff;letter-spacing:1.660px;">Tagihan Asuransi</span>
<span class="tx" style="left:975.30px;top:743px;font-size:19.5px;font-weight:700;color:#3e3e4c;letter-spacing:-0.391px;">91.7 K</span>
<div class="a" style="left:1037px;top:750.1px;width:35.0px;height:11px;border-radius:6px;background:#33ea33"></div>
<span class="tx" style="left:1042.10px;top:751px;font-size:10px;font-weight:400;color:#fff;letter-spacing:-0.612px;font-style:italic;">Lunas</span>
<div class="btn" style="left:1230px;top:743.1px"></div>
<span class="tx" style="left:1241.30px;top:747px;font-size:12px;font-weight:400;color:#fff;letter-spacing:-0.030px;">Lihat Detail</span>
<span class="tx" style="left:975.30px;top:773px;font-size:19.5px;font-weight:700;color:#3e3e4c;letter-spacing:-1.440px;">0 JT</span>
<div class="a" style="left:1016px;top:780.1px;width:66.0px;height:11px;border-radius:6px;background:#ec2530"></div>
<span class="tx" style="left:1021.30px;top:781px;font-size:10px;font-weight:400;color:#fff;letter-spacing:-0.297px;font-style:italic;">Belum Lunas</span>
<div class="btn" style="left:1230px;top:773.1px"></div>
<span class="tx" style="left:1241.30px;top:777px;font-size:12px;font-weight:400;color:#fff;letter-spacing:-0.030px;">Lihat Detail</span>
<div class="sep" style="top:809.2px"></div>
</div>
<div id="side">
<div class="a" style="left:0;top:0;width:146px;height:38px;background:#5f88b0"></div>
<svg class="a" style="left:11px;top:7.5px" width="22" height="22" viewBox="0 0 22 22"><rect x="0.5" y="0.8" width="21" height="15" rx="1.2" fill="#ececf0" stroke="#4a4a55" stroke-width="1"/><rect x="0.5" y="13.2" width="21" height="2.6" fill="#8c8c98"/><path d="M8.500 15.800h5l.8 3.400h-6.600z" fill="#7d7d88"/><rect x="5" y="19" width="12" height="1.800" rx=".5" fill="#5c5c66"/><circle cx="5.300" cy="6" r="3.600" fill="#f2d40c"/><path d="M5.300 6V2.400A3.600 3.600 0 0 0 2 7.500z" fill="#e8421c"/><path d="M5.300 6V2.400A3.600 3.600 0 0 1 8.800 5.200z" fill="#7a18c9"/><rect x="2" y="10.800" width="5.500" height=".8" fill="#666"/><rect x="9.800" y="7.500" width="1.700" height="4.500" fill="#2a7fae"/><rect x="12.300" y="9.500" width="1.500" height="2.500" fill="#27b09a"/><rect x="14.600" y="4.300" width="1.800" height="7.700" fill="#1f5f94"/><rect x="17.300" y="7.500" width="1.700" height="4.500" fill="#13806b"/></svg>
<span class="tx" style="left:38.50px;top:11px;font-size:13.3px;font-weight:400;color:#d5e2ef;letter-spacing:-0.685px;">Dashboard RS</span>
<svg class="a" style="left:11px;top:45.5px" width="22" height="22" viewBox="0 0 22 22"><rect x="1" y="8" width="20" height="11" fill="#e4e4e8"/><rect x="5.500" y="5" width="11" height="14" fill="#f4f4f6"/><rect x="5" y="4" width="12" height="1.300" fill="#f5a21c"/><rect x=".7" y="7.400" width="5" height="1" fill="#f5a21c"/><rect x="16.300" y="7.400" width="5" height="1" fill="#f5a21c"/><g fill="#55555f"><rect x="7" y="6.500" width="1.200" height="2.500"/><rect x="9.300" y="6.500" width="1.200" height="2.500"/><rect x="11.600" y="6.500" width="1.200" height="2.500"/><rect x="13.900" y="6.500" width="1.200" height="2.500"/><rect x="7" y="10.500" width="1.200" height="2.500"/><rect x="9.300" y="10.500" width="1.200" height="2.500"/><rect x="11.600" y="10.500" width="1.200" height="2.500"/><rect x="13.900" y="10.500" width="1.200" height="2.500"/><rect x="2.300" y="9.500" width="2" height="1.200"/><rect x="2.300" y="12" width="2" height="1.200"/><rect x="17.700" y="9.500" width="2" height="1.200"/><rect x="17.700" y="12" width="2" height="1.200"/></g><rect x="6.500" y="14.300" width="9" height="1.200" fill="#f0606a"/><rect x="8.800" y="15.500" width="4.400" height="3.500" fill="#4ab2e8"/><rect x="14" y="15.800" width="2.400" height="2.400" fill="#bfe4f5"/><rect x="5.600" y="15.800" width="2.400" height="2.400" fill="#f6b7bd"/><circle cx="1.300" cy="16.500" r="1.500" fill="#5fd11f"/><circle cx="20.700" cy="16.500" r="1.500" fill="#5fd11f"/><rect x=".5" y="19" width="21" height=".9" fill="#9a9aa4"/></svg>
<span class="tx" style="left:38.50px;top:49px;font-size:13.3px;font-weight:400;color:#e8e8e8;letter-spacing:-0.642px;">Manajemen RS</span>
<svg class="a" style="left:11px;top:83.5px" width="22" height="22" viewBox="0 0 22 22"><path d="M7 1h10l3.500 3.500V14H7z" fill="#d9ceb8" stroke="#6b6458" stroke-width=".8"/><rect x="9" y="2.500" width="7" height="2.200" fill="#f4f4f4"/><path d="M17 1v3.500h3.500z" fill="#5fb84a"/><rect x="9" y="6.500" width="1" height="1" fill="#4f7a4a"/><rect x="9" y="8.700" width="1" height="1" fill="#4f7a4a"/><rect x="9" y="10.900" width="1" height="1" fill="#4f7a4a"/><circle cx="17.500" cy="11.800" r="1.800" fill="#e8553f"/><circle cx="2" cy="3.300" r="1.600" fill="#e8603f"/><circle cx="2" cy="8.300" r="1.600" fill="#e8603f"/><path d="M1 14l3.300-3 3.400 3z" fill="#f0d84a"/><path d="M8 14l4-3.400 4 3.400z" fill="#f0d84a"/><rect x="1" y="14" width="7" height="5" fill="#cfd3da" stroke="#555" stroke-width=".6"/><rect x="2" y="15.300" width="2" height="2" fill="#3f6f9f"/><rect x="5" y="15.300" width="2" height="2" fill="#3f6f9f"/><rect x="8.600" y="14" width="7" height="5" fill="#e8d24a" stroke="#555" stroke-width=".6"/><rect x="11" y="15.800" width="2.300" height="3.200" fill="#8a8f98"/></svg>
<span class="tx" style="left:38.50px;top:87px;font-size:13.3px;font-weight:400;color:#e8e8e8;letter-spacing:-0.330px;">Manajemen A…</span>
<svg class="a" style="left:11px;top:121.5px" width="22" height="22" viewBox="0 0 22 22"><rect x="1.200" y="6.500" width="17.500" height="10.500" fill="none" stroke="#d8d8dc" stroke-width="1.100"/><rect x="1.200" y="14.600" width="17.500" height="2.400" fill="#d8d8dc"/><rect x="4" y="19.300" width="12" height="1" fill="#e4e4e8"/><rect x="6.500" y="6" width="7" height="6" rx=".6" fill="#e8dd4a" stroke="#3a3a3a" stroke-width=".6"/><path d="M8 6V4.200a2 2 0 0 1 4 0V6" fill="none" stroke="#e0e0e0" stroke-width="1"/><circle cx="10" cy="8.300" r=".9" fill="#333"/><rect x="9.600" y="8.500" width=".8" height="2" fill="#333"/><path d="M4 9.500l3 3.500h6l3-3.500-1 4.200-3.200 1.300H8.200L5 13.700z" fill="#f0c9a0"/><path d="M8 12.500h4l-2 2.800z" fill="#f4f4f4"/><circle cx="19" cy="15.300" r="2" fill="#444" stroke="#ddd" stroke-width=".8"/></svg>
<span class="tx" style="left:38.50px;top:125px;font-size:13.3px;font-weight:400;color:#e8e8e8;letter-spacing:-0.581px;">Access Manager</span>
<svg class="a" style="left:11px;top:159.5px" width="22" height="22" viewBox="0 0 22 22"><rect x="0" y="0" width="22" height="22" rx="1.200" fill="#c8407f"/><path d="M0 0h22v22z" fill="#b8356f" opacity=".35"/><path d="M4 15.800a7.200 7.200 0 1 1 14 0z" fill="#fff"/><path d="M11 15l1.300-7" stroke="#b03068" stroke-width="1.300" stroke-linecap="round"/><circle cx="11" cy="14.600" r="1.200" fill="#b03068"/><g fill="#c8407f"><circle cx="6.300" cy="12.500" r=".6"/><circle cx="7.800" cy="9.300" r=".6"/><circle cx="15.700" cy="12.500" r=".6"/><circle cx="14.800" cy="9.600" r=".6"/></g></svg>
<span class="tx" style="left:38.50px;top:163px;font-size:13.3px;font-weight:400;color:#e8e8e8;letter-spacing:-0.595px;">Dasbor</span>
<svg class="a" style="left:11px;top:197.5px" width="22" height="22" viewBox="0 0 22 22"><rect x="7" y=".5" width="6.500" height="5" rx=".8" fill="#2fd6d0"/><circle cx="10.200" cy="3" r="1.300" fill="#0e5a6a"/><circle cx="5" cy="7.300" r="2.200" fill="#f2a778"/><path d="M3.300 5.800a2 2 0 0 1 3.400-.8l-.5 1.300z" fill="#c8561c"/><path d="M1.500 11h6l1.500 4H1.500z" fill="#1fa39a"/><rect x="0" y="12.500" width="5" height="8.500" rx=".6" fill="#f07a1c"/><path d="M7 12.500l5 2.300v1.200H7z" fill="#1fa39a"/><circle cx="16.300" cy="6.500" r="1.600" fill="#f2a778"/><path d="M15 5.800a1.500 1.500 0 0 1 2.800 0z" fill="#c8561c"/><rect x="13.300" y="8.500" width="6" height="5" fill="#35c9d6"/><rect x="15.600" y="8.500" width="1.300" height="4.500" fill="#f4f4f4"/><rect x="12" y="14.500" width="3" height=".8" fill="#333"/><rect x="6.500" y="15.500" width="15.500" height="2.300" fill="#c9c9cf"/><rect x="8" y="17.800" width="13" height="3.200" fill="#9b9ba4"/></svg>
<span class="tx" style="left:38.50px;top:201px;font-size:13.3px;font-weight:400;color:#e8e8e8;letter-spacing:-0.381px;">Admisi</span>
<svg class="a" style="left:11px;top:235.5px" width="22" height="22" viewBox="0 0 22 22"><circle cx="11" cy="12" r="10" fill="#7a6be0"/><path d="M1.500 9a9.500 9.500 0 0 1 19 0z" fill="#f2d53c"/><circle cx="3.700" cy="6.300" r="2.300" fill="#5a3fb0"/><rect x="2" y="7" width="3.500" height="2" rx=".8" fill="#dfe4f5"/><path d="M0.800 13c0-3 6-3 6 0v6H2.500z" fill="#4a3aa8"/><circle cx="18" cy="5.800" r="2.300" fill="#f6c6a8"/><path d="M15.800 5a2.200 2.200 0 0 1 4.400 0z" fill="#f4f4fb"/><circle cx="18" cy="3.800" r=".5" fill="#e8424f"/><path d="M15 12c0-3 6.300-3 6.300 0v5l-3 3h-3.300z" fill="#4f7fe0"/><circle cx="10.800" cy="6.800" r="3.300" fill="#f4b58c"/><path d="M7.500 6.500a3.300 3.300 0 0 1 6.600 0l-1-1.200h-4.600z" fill="#e8901c"/><path d="M4.500 17c0-6.500 13-6.500 13 0v3.500a10 10 0 0 1-13 0z" fill="#d9d3f5"/><path d="M9 11.300l1.800 3 1.800-3z" fill="#f4b58c"/><circle cx="8" cy="16.500" r="1" fill="#e8424f"/></svg>
<span class="tx" style="left:38.50px;top:239px;font-size:13.3px;font-weight:400;color:#e8e8e8;letter-spacing:-1.045px;">Layanan RS</span>
<svg class="a" style="left:11px;top:273.5px" width="22" height="22" viewBox="0 0 22 22"><rect x="0" y="0" width="22" height="22" rx="1.200" fill="#5b5b5b"/><path d="M0 0h22v22z" fill="#4b4b4b" opacity=".35"/><path d="M6 6h10l1.500 3.500h-13z" fill="#fff"/><path d="M4.500 9.500h13v1.300a1.600 1.600 0 0 1-3.250 0 1.600 1.600 0 0 1-3.250 0 1.600 1.600 0 0 1-3.250 0 1.600 1.600 0 0 1-3.250 0z" fill="#fff"/><path d="M5.500 12.500h11V17h-11zM7 14v3h3v-3zM12.500 14v1.800h2.500V14z" fill="#fff" fill-rule="evenodd"/></svg>
<span class="tx" style="left:38.50px;top:277px;font-size:13.3px;font-weight:400;color:#e8e8e8;letter-spacing:-2.094px;">POS</span>
<svg class="a" style="left:11px;top:311.5px" width="22" height="22" viewBox="0 0 22 22"><rect x="5.500" y="0" width="9" height="4" fill="#23d14f"/><rect x="7" y="1.200" width="6" height="1.600" fill="#0c6e27"/><rect x="9.600" y="4" width=".8" height="2" fill="#cfd8e3"/><path d="M5 6.500h10l1 2H4z" fill="#dfe8f2"/><rect x="5" y="8.500" width="10" height="12" fill="#f1f5fa"/><rect x="6.500" y="9.300" width="7" height="3.700" fill="#54b4f0"/><rect x="8" y="14.500" width="4" height="6" fill="#3f9fe0"/><rect x="9.800" y="14.500" width=".5" height="6" fill="#e8f0f8"/><g fill="#d8e3ee"><rect x="0" y="10" width="5" height="1.700"/><rect x="0" y="13" width="5" height="1.700"/><rect x="0" y="16" width="5" height="1.700"/><rect x="0" y="19" width="5" height="1.700"/><rect x="15" y="10" width="5.500" height="1.700"/><rect x="15" y="13" width="5.500" height="1.700"/><rect x="15" y="16" width="5.500" height="1.700"/><rect x="15" y="19" width="5.500" height="1.700"/></g><g fill="#2f6f9f"><rect x="0" y="11.700" width="5" height="1.300"/><rect x="0" y="14.700" width="5" height="1.300"/><rect x="0" y="17.700" width="5" height="1.300"/><rect x="15" y="11.700" width="5.500" height="1.300"/><rect x="15" y="14.700" width="5.500" height="1.300"/><rect x="15" y="17.700" width="5.500" height="1.300"/></g><rect x="0" y="20.700" width="20.500" height=".7" fill="#3f7fb0"/></svg>
<span class="tx" style="left:38.50px;top:315px;font-size:13.3px;font-weight:400;color:#e8e8e8;letter-spacing:-0.398px;">Penunjang Me…</span>
<svg class="a" style="left:11px;top:349.5px" width="22" height="22" viewBox="0 0 22 22"><rect x="0" y="1" width="21.500" height="20" fill="#6e8fe6"/><rect x="0" y=".3" width="21.500" height="1" fill="#4a6fd0"/><rect x="1" y="2" width="19.500" height="4.800" fill="#f2f5fb"/><rect x="2" y="2.600" width="3.600" height="3.600" fill="#2fc46a"/><rect x="3.400" y="3" width=".9" height="2.800" fill="#fff"/><rect x="2.400" y="4" width="2.800" height=".9" fill="#fff"/><rect x="7" y="3.500" width="11.500" height="1.700" fill="#6a7386"/><rect x="1" y="8.300" width="3.700" height="12.700" fill="#2e3a5c"/><rect x="5" y="8.300" width="3.700" height="12.700" fill="#2e3a5c"/><rect x="9.800" y="8.300" width="4.800" height="8.200" fill="#3a4668"/><path d="M10.800 16.500v-3a1.400 1.400 0 0 1 2.800 0v3z" fill="#dfe6f5"/><rect x="15.500" y="8.300" width="5" height="8.200" fill="#2e3a5c"/><rect x="16" y="9.300" width="1.800" height="2" fill="#e86a6a"/><rect x="18.200" y="9.300" width="1.800" height="2" fill="#5fd08a"/><rect x="16" y="12.300" width="1.800" height="2" fill="#5fd08a"/><rect x="18.200" y="12.300" width="1.800" height="2" fill="#e8d06a"/><rect x="9.800" y="17.300" width="11" height="3.700" fill="#8fa8f0"/></svg>
<span class="tx" style="left:38.50px;top:353px;font-size:13.3px;font-weight:400;color:#e8e8e8;letter-spacing:-0.789px;">Farmasi</span>
<svg class="a" style="left:11px;top:387.5px" width="22" height="22" viewBox="0 0 22 22"><circle cx="9.500" cy="2.800" r="2.600" fill="#f2d53c"/><circle cx="9.500" cy="2.800" r="1.200" fill="#fff6c0"/><path d="M5 5.500l4.500-2 4.500 2V20H5z" fill="#e1e5ec"/><rect x="0" y="8" width="5.500" height="12" fill="#b9c0cc"/><g fill="#2f6fe0"><rect x="1" y="9.300" width="1.400" height="2"/><rect x="3.200" y="9.300" width="1.400" height="2"/><rect x="1" y="12.800" width="1.400" height="2"/><rect x="3.200" y="12.800" width="1.400" height="2"/><rect x="1" y="16.300" width="1.400" height="2"/><rect x="6.500" y="7.500" width="1.600" height="2.300"/><rect x="9.300" y="7.500" width="1.600" height="2.300"/><rect x="6.500" y="11.500" width="1.600" height="2.300"/><rect x="9.300" y="11.500" width="1.600" height="2.300"/></g><rect x="7.800" y="16" width="3.600" height="4" fill="#e8b81c"/><path d="M16.800 6.500a4.300 4.300 0 0 1 4.300 4.300c0 3.200-4.300 8.200-4.300 8.200s-4.300-5-4.300-8.200a4.300 4.300 0 0 1 4.300-4.300z" fill="#f0321c"/><circle cx="16.800" cy="10.800" r="1.900" fill="#1a1a1a"/><rect x="0" y="20" width="14" height=".8" fill="#8a8f98"/></svg>
<span class="tx" style="left:38.50px;top:391px;font-size:13.3px;font-weight:400;color:#e8e8e8;letter-spacing:-0.408px;">Penunjang No…</span>
<svg class="a" style="left:11px;top:425.5px" width="22" height="22" viewBox="0 0 22 22"><rect x="13" y=".5" width="7.500" height="15" fill="#d4d6da"/><path d="M16 1.500h3.500v12" fill="none" stroke="#8a8c92" stroke-width=".8"/><path d="M0 2h10.500l1.500 1.500h4V19H2V12H0z" fill="#d8cf7e"/><rect x="12.500" y="3.500" width="2.500" height="8.500" fill="#e8e2a0"/><rect x=".5" y="2.800" width="9" height="8.200" fill="#4a4f4a" stroke="#d8cf7e" stroke-width=".8"/><rect x="1.500" y="3.600" width="7" height="5.600" fill="#c9d4cf"/><circle cx="5" cy="5.600" r="1.500" fill="#f2c9a0"/><path d="M3.300 5.300a1.700 1.700 0 0 1 3.400 0l-.6-.7H3.900z" fill="#2a2a2a"/><path d="M2.300 9.200c0-2.600 5.400-2.600 5.400 0z" fill="#2a2a2a"/><rect x="2" y="9.600" width="6" height=".9" fill="#1fa37a"/><rect x="3.500" y="12.500" width=".8" height="5" fill="#b0a85a"/><rect x="8" y="12" width="6.500" height="6.300" rx=".6" fill="#e8503a"/><circle cx="11.200" cy="15.100" r="2" fill="#f4d0c8"/><path d="M10.800 13.800h.8v.9h.9v.8h-.9v.9h-.8v-.9h-.9v-.8h.9z" fill="#c8321c"/></svg>
<span class="tx" style="left:38.50px;top:429px;font-size:13.3px;font-weight:400;color:#e8e8e8;letter-spacing:-0.520px;">Rekam Medis</span>
<svg class="a" style="left:11px;top:463.5px" width="22" height="22" viewBox="0 0 22 22"><rect x="9.600" y="0" width="1.500" height="1.300" fill="#e86a7a"/><rect x="10" y="1" width=".5" height="2" fill="#bbb"/><rect x="1" y="2.800" width="13.500" height="1.600" fill="#d8dde4"/><rect x="1.500" y="4.400" width="12.500" height="15.300" fill="#eef1f5"/><rect x="3.300" y="5.800" width="3.700" height="7" fill="#2f6fc0"/><path d="M5.100 5.800v7M3.300 8.100h3.700M3.300 10.400h3.700" stroke="#1a4a8a" stroke-width=".4"/><g fill="#f8fafc"><rect x="7.500" y="5.600" width="7.500" height="1.500"/><rect x="7.500" y="8" width="8.500" height="1.500"/><rect x="7.500" y="10.400" width="7.500" height="1.500"/></g><rect x="10.500" y="9.800" width="9.500" height="9.900" fill="#dfe4ea"/><rect x="11.500" y="11" width="8" height="2.300" fill="#2f6fc0"/><rect x="11.500" y="14.500" width="8" height="2.300" fill="#2f6fc0"/><rect x="7.500" y="13" width="3" height="1.200" fill="#f8fafc"/><rect x="3.300" y="15.500" width="2" height="2.200" fill="#3f9fe0"/><rect x="7" y="17.500" width="4.500" height="2.200" fill="#c9ced6"/><ellipse cx="3" cy="19.800" rx="3" ry="1.300" fill="#3fc43a"/><ellipse cx="17.500" cy="19.800" rx="3" ry="1.300" fill="#3fc43a"/></svg>
<span class="tx" style="left:38.50px;top:467px;font-size:13.3px;font-weight:400;color:#e8e8e8;letter-spacing:-0.577px;">Logistik RS</span>
<svg class="a" style="left:11px;top:501.5px" width="22" height="22" viewBox="0 0 22 22"><g fill="#00b3ad"><path d="M11.800 2.500h1.500a2.600 2.600 0 0 1 5.200 1.400 2.600 2.600 0 0 1 1.400 5.100v1.500h-8.100z"/><path d="M11.800 19.500h1.500a2.600 2.600 0 0 0 5.200-1.400 2.600 2.600 0 0 0 1.400-5.100v-1.500h-8.100z"/><path d="M10.200 19.500h-1.500a2.600 2.600 0 0 1-5.200-1.400 2.600 2.600 0 0 1-1.400-5.100v-1.500h8.100z"/></g><path d="M10.200 2.500h-1.500a2.600 2.600 0 0 0-2 .3v3.400h-3.400a2.600 2.600 0 0 0-1.200 2.800v1.500h8.100z" fill="#b8e61c"/><circle cx="4.400" cy="3.900" r="1.500" fill="#b8e61c"/></svg>
<span class="tx" style="left:38.50px;top:505px;font-size:13.3px;font-weight:400;color:#e8e8e8;letter-spacing:-0.437px;">Satusehat</span>
<svg class="a" style="left:11px;top:539.5px" width="22" height="22" viewBox="0 0 22 22"><circle cx="11" cy="11" r="8.200" fill="none" stroke="#09a34a" stroke-width="3" stroke-dasharray="6.400 6.480"/><circle cx="11" cy="11" r="8.200" fill="none" stroke="#4a1f94" stroke-width="3" stroke-dasharray="6.400 6.480" stroke-dashoffset="6.440"/><circle cx="3.800" cy="4" r="2" fill="#4a1f94"/><circle cx="18.200" cy="4" r="2" fill="#09a34a"/><circle cx="3.800" cy="18" r="2" fill="#09a34a"/><circle cx="18.200" cy="18" r="2" fill="#4a1f94"/><circle cx="11" cy="11" r="4.600" fill="#09a34a"/><path d="M10 7.800h2V10h2.200v2H12v2.200h-2V12H7.800v-2H10z" fill="#fff"/></svg>
<span class="tx" style="left:38.50px;top:543px;font-size:13.3px;font-weight:400;color:#e8e8e8;letter-spacing:-2.054px;">BPJS</span>
<svg class="a" style="left:11px;top:577.5px" width="22" height="22" viewBox="0 0 22 22"><rect x="1" y="1" width="9" height="5" fill="#00e05a"/><rect x="3.200" y="3.300" width="4.600" height="1.200" fill="#d8ffe6"/><rect x="12" y="5" width="9" height="4.500" fill="#00e05a"/><rect x="14" y="6.400" width="5" height="1.800" fill="#7ff0a8"/><path d="M5.500 6v2.500h10.500V9.500" fill="none" stroke="#222" stroke-width=".6"/><rect x="1.300" y="10.300" width="15" height="9.200" rx="1.600" fill="#00e05a" stroke="#f0f0f0" stroke-width=".9"/><ellipse cx="8.800" cy="14.900" rx="1.800" ry="2.800" fill="#f4fff8"/></svg>
<span class="tx" style="left:38.50px;top:581px;font-size:13.3px;font-weight:400;color:#e8e8e8;letter-spacing:-0.453px;">Commission M…</span>
<svg class="a" style="left:11px;top:615.5px" width="22" height="22" viewBox="0 0 22 22"><path d="M13.500 0.500c4.500 0 8 3 8 6.800 0 2-.9 3.700-2.400 5l1.300 3-3.600-1.700c-1 .4-2.100.6-3.300.6-4.500 0-8-3-8-6.900s3.500-6.800 8-6.800z" fill="#3f2be0"/><path d="M13.500 .5c-4.500 0-8 3-8 6.800 0 3.900 3.500 6.900 8 6.900z" fill="#6a5bff"/><path d="M9 6.500c4.700 0 8.500 3 8.500 6.800S13.700 20 9 20c-1.200 0-2.300-.2-3.400-.5L1.300 21.500l1.200-3.600C1.200 16.700 .5 15.100 .5 13.300.5 9.500 4.300 6.500 9 6.500z" fill="#ffc400"/><path d="M9 6.500c4.700 0 8.500 3 8.500 6.800S13.700 20 9 20z" fill="#ffa000"/><circle cx="5.200" cy="13.300" r="1.100" fill="#3f2be0"/><circle cx="9" cy="13.300" r="1.100" fill="#3f2be0"/><circle cx="12.800" cy="13.300" r="1.100" fill="#3f2be0"/></svg>
<span class="tx" style="left:38.50px;top:619px;font-size:13.3px;font-weight:400;color:#e8e8e8;letter-spacing:-0.610px;">Diskusi</span>
<svg class="a" style="left:11px;top:653.5px" width="22" height="22" viewBox="0 0 22 22"><circle cx="11.500" cy="11" r="10" fill="#1cc4f5"/><rect x="0" y="3" width="9.500" height="10" fill="#ffe31c"/><path d="M0 3l4.700 4 4.800-4" fill="none" stroke="#f0c000" stroke-width=".6"/><rect x="10" y="0" width="9" height="15" rx="1.200" fill="#4a1fd6"/><rect x="12.800" y="1.200" width="3.400" height=".7" fill="#8a6af0"/><circle cx="14.500" cy="5.300" r="1.400" fill="#ffd9b0"/><rect x="12.200" y="7.500" width="4.600" height="1.800" rx=".6" fill="#1fe0a0"/><rect x="11.800" y="10.500" width="5.400" height=".8" fill="#8a8af5"/><rect x="12.300" y="12.300" width="4.400" height=".8" fill="#ff7a4a"/><path d="M2 9.500c1-1.500 3-1.500 4 0l.2 2c1.500 2 3.300 3.500 5.300 4.500l2 .2c1.500 1 1.500 3 0 4-1.200.8-2.800.3-4.300-.5-3-1.700-5.300-4-7-7C1.500 11.700 1.200 10.500 2 9.500z" fill="#ff7a1c"/></svg>
<span class="tx" style="left:38.50px;top:657px;font-size:13.3px;font-weight:400;color:#e8e8e8;letter-spacing:-0.341px;">Kontak</span>
<svg class="a" style="left:11px;top:691.5px" width="22" height="22" viewBox="0 0 22 22"><circle cx="4.700" cy="5.300" r="4.200" fill="#c4f01c"/><circle cx="4.700" cy="5.300" r="3" fill="none" stroke="#2fc44a" stroke-width=".8"/><path d="M5.900 3.900c-.3-.5-.8-.7-1.300-.7-.8 0-1.300.4-1.300 1s.5.900 1.300 1.100c.9.200 1.400.5 1.400 1.200 0 .6-.6 1-1.400 1-.6 0-1.200-.3-1.500-.8M4.700 2.300v6" fill="none" stroke="#2fc44a" stroke-width=".8"/><path d="M9.500 4l2.500 2.800 4.300-4.300" fill="none" stroke="#4a3a8a" stroke-width=".9"/><path d="M14.800 1.300h2.700v2.700z" fill="#4a3a8a"/><rect x="2.500" y="13" width="3" height="8" fill="#b8f01c"/><rect x="5.500" y="13" width="1.300" height="8" fill="#3fd45a"/><rect x="7" y="10" width="3.500" height="11" fill="#3fb8f5"/><rect x="10.700" y="7" width="3.500" height="14" fill="#b8f01c"/><rect x="14.200" y="7" width="3.800" height="14" fill="#00d45a"/></svg>
<span class="tx" style="left:38.50px;top:695px;font-size:13.3px;font-weight:400;color:#e8e8e8;letter-spacing:-0.470px;">Penjualan</span>
</div>
<div id="nav">
<svg class="a" style="left:0;top:0" width="40" height="40"><rect x="13.8" y="11.8" width="5.0" height="3.7" rx="0.6" fill="#f1f3f5"/><rect x="20.0" y="11.8" width="5.0" height="3.7" rx="0.6" fill="#f1f3f5"/><rect x="26.2" y="11.8" width="5.0" height="3.7" rx="0.6" fill="#f1f3f5"/><rect x="13.8" y="16.6" width="5.0" height="3.7" rx="0.6" fill="#f1f3f5"/><rect x="20.0" y="16.6" width="5.0" height="3.7" rx="0.6" fill="#f1f3f5"/><rect x="26.2" y="16.6" width="5.0" height="3.7" rx="0.6" fill="#f1f3f5"/><rect x="13.8" y="21.4" width="5.0" height="3.7" rx="0.6" fill="#f1f3f5"/><rect x="20.0" y="21.4" width="5.0" height="3.7" rx="0.6" fill="#f1f3f5"/><rect x="26.2" y="21.4" width="5.0" height="3.7" rx="0.6" fill="#f1f3f5"/></svg>
<span class="tx" style="left:45.30px;top:12px;font-size:16.5px;font-weight:400;color:#eef0f3;letter-spacing:-0.321px;">Dashboard RS</span>
<span class="tx" style="left:174.90px;top:14px;font-size:13px;font-weight:400;color:#e9edf1;letter-spacing:-0.312px;">Keuangan</span>
<span class="tx" style="left:256.60px;top:14px;font-size:13px;font-weight:400;color:#e9edf1;letter-spacing:-0.021px;">Admisi</span>
<span class="tx" style="left:320.30px;top:14px;font-size:13px;font-weight:400;color:#e9edf1;letter-spacing:-0.750px;">Layanan RS</span>
<span class="tx" style="left:409.90px;top:14px;font-size:13px;font-weight:400;color:#e9edf1;letter-spacing:-0.097px;">Penunjang Medis</span>
<span class="tx" style="left:533.20px;top:14px;font-size:13px;font-weight:400;color:#e9edf1;letter-spacing:0.036px;">Manajemen Aset</span>
<span class="tx" style="left:654.60px;top:14px;font-size:13px;font-weight:400;color:#e9edf1;letter-spacing:-0.270px;">Satu Sehat</span>
<svg class="a" style="left:967px;top:12.3px" width="13.4" height="13.4" viewBox="0 0 15 15"><g fill="#f1f3f5"><ellipse cx="7.5" cy="9" rx="3.7" ry="5"/><path d="M4.600 4.300a2.900 2.900 0 0 1 5.800 0z"/><path d="M.6 8.300h13.800v1.500H.6z"/><path d="M2 2.500l3 3-1 1-3-3zM13 2.500l-3 3 1 1 3-3zM2 15l3-3-1-1-3 3zM13 15l-3-3 1-1 3 3z"/></g><path d="M7.500 5.300v8.500" stroke="#243142" stroke-width="1"/></svg>
<svg class="a" style="left:997.8px;top:13.2px" width="18" height="15" viewBox="0 0 18 15"><g fill="#eef0f3"><path d="M7.600 .5C3.700 .5 .5 2.700 .5 5.500c0 1.500.9 2.900 2.400 3.800-.3.900-.8 1.700-1.500 2.400 1.600-.1 3.100-.7 4.100-1.500.7.100 1.400.2 2.100.2 3.900 0 7.100-2.200 7.100-5S11.500 .5 7.600 .5z"/><path d="M15.600 5.800c0 3-3.300 5.500-7.500 5.700 1.100 1 2.800 1.600 4.600 1.600.5 0 1.100-.05 1.600-.15.900.7 2 1.200 3.200 1.300-.5-.6-1-1.300-1.200-2.100 1.100-.8 1.700-1.800 1.700-2.900 0-1.400-1-2.600-2.500-3.300z"/></g></svg>
<div class="a" style="left:1014px;top:7.1px;width:16.7px;height:15.8px;background:#5f88b0"></div>
<span class="tx" style="left:1019.60px;top:9px;font-size:11px;font-weight:400;color:#fff;letter-spacing:0.000px;">2</span>
<svg class="a" style="left:1044.3px;top:11.6px" width="16" height="16" viewBox="0 0 16 16"><circle cx="8" cy="8" r="6.500" fill="none" stroke="#f1f3f5" stroke-width="2.100"/><path d="M8.600 4.600v4.100H5.200" fill="none" stroke="#f1f3f5" stroke-width="1.500"/></svg>
<div class="a" style="left:1058.4px;top:7.1px;width:16.4px;height:15.8px;background:#5f88b0"></div>
<span class="tx" style="left:1063.90px;top:9px;font-size:11px;font-weight:400;color:#fff;letter-spacing:0.000px;">2</span>
<div class="a" style="left:1088.7px;top:8.5px;width:23.4px;height:23.4px;border-radius:50%;background:#b3204f"></div>
<span class="tx" style="left:1096.60px;top:15px;font-size:11.5px;font-weight:400;color:#fff;letter-spacing:0.000px;">A</span>
<span class="tx" style="left:1117.00px;top:14px;font-size:13px;font-weight:400;color:#e9edf1;letter-spacing:0.082px;">Administrator (db_simrs_mujirahayu_p...</span>
</div>
<div id="sb"><svg width="15" height="728" viewBox="0 0 15 728"><path d="M3 10.8 L7.5 5.8 L12 10.8Z" fill="#8b8b8b"/><rect x="3" y="17.5" width="9" height="366.3" rx="4.5" fill="#8b8b8b"/><path d="M3 715.8 L12 715.8 L7.5 721Z" fill="#8b8b8b"/></svg></div>
</body></html>
